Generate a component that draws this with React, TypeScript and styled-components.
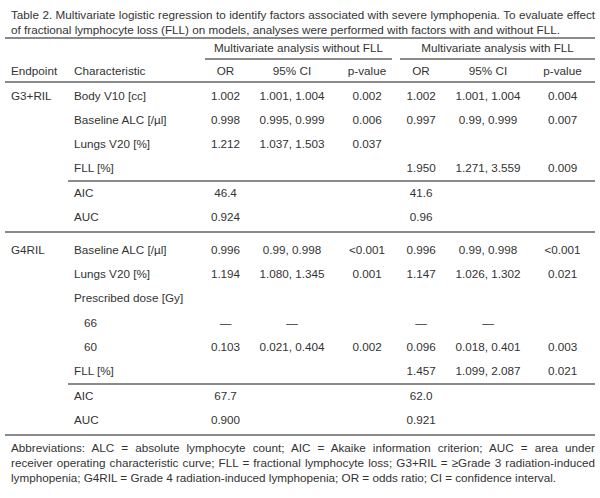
import React from "react";
import styled, { createGlobalStyle } from "styled-components";

const GlobalStyle = createGlobalStyle`
  html, body {
    margin: 0;
    padding: 0;
    background: #ffffff;
  }
`;

type Row = {
  label: string;
  indent?: boolean;
  values?: string[];
};

type Group = {
  endpoint: string;
  lead: number;
  rows: Row[];
  fit: { aic: string[]; auc: string[] };
};

const groups: Group[] = [
  {
    endpoint: "G3+RIL",
    lead: 1,
    rows: [
      { label: "Body V10 [cc]", values: ["1.002", "1.001, 1.004", "0.002", "1.002", "1.001, 1.004", "0.004"] },
      { label: "Baseline ALC [/µl]", values: ["0.998", "0.995, 0.999", "0.006", "0.997", "0.99, 0.999", "0.007"] },
      { label: "Lungs V20 [%]", values: ["1.212", "1.037, 1.503", "0.037", "", "", ""] },
      { label: "FLL [%]", values: ["", "", "", "1.950", "1.271, 3.559", "0.009"] },
    ],
    fit: { aic: ["46.4", "41.6"], auc: ["0.924", "0.96"] },
  },
  {
    endpoint: "G4RIL",
    lead: 5,
    rows: [
      { label: "Baseline ALC [/µl]", values: ["0.996", "0.99, 0.998", "<0.001", "0.996", "0.99, 0.998", "<0.001"] },
      { label: "Lungs V20 [%]", values: ["1.194", "1.080, 1.345", "0.001", "1.147", "1.026, 1.302", "0.021"] },
      { label: "Prescribed dose [Gy]" },
      { label: "66", indent: true, values: ["—", "—", "", "—", "—", ""] },
      { label: "60", indent: true, values: ["0.103", "0.021, 0.404", "0.002", "0.096", "0.018, 0.401", "0.003"] },
      { label: "FLL [%]", values: ["", "", "", "1.457", "1.099, 2.087", "0.021"] },
    ],
    fit: { aic: ["67.7", "62.0"], auc: ["0.900", "0.921"] },
  },
];

const notes = [
  "Abbreviations: ALC = absolute lymphocyte count; AIC = Akaike information criterion; AUC = area under",
  "receiver operating characteristic curve; FLL = fractional lymphocyte loss; G3+RIL = ≥Grade 3 radiation-induced",
  "lymphopenia; G4RIL = Grade 4 radiation-induced lymphopenia; OR = odds ratio; CI = confidence interval.",
];

const App: React.FC = () => {
  return (
    <Page>
      <GlobalStyle />
      <Caption>
        Table 2. Multivariate logistic regression to identify factors associated with severe lymphopenia. To evaluate effect
        of fractional lymphocyte loss (FLL) on models, analyses were performed with factors with and without FLL.
      </Caption>
      <Table>
        <colgroup>
          <col style={{ width: 63 }} />
          <col style={{ width: 137 }} />
          <col style={{ width: 41 }} />
          <col style={{ width: 92 }} />
          <col style={{ width: 58 }} />
          <col style={{ width: 50 }} />
          <col style={{ width: 84 }} />
          <col style={{ width: 65 }} />
        </colgroup>
        <thead>
          <SubHeadRow>
            <th />
            <th />
            <GroupHead colSpan={3}>
              <GroupLabel $side="left">Multivariate analysis without FLL</GroupLabel>
            </GroupHead>
            <GroupHead colSpan={3}>
              <GroupLabel $side="right">Multivariate analysis with FLL</GroupLabel>
            </GroupHead>
          </SubHeadRow>
          <HeadRow>
            <HeadCell $align="left">Endpoint</HeadCell>
            <HeadCell $align="left">Characteristic</HeadCell>
            <HeadCell>OR</HeadCell>
            <HeadCell>95% CI</HeadCell>
            <HeadCell>p-value</HeadCell>
            <HeadCell>OR</HeadCell>
            <HeadCell>95% CI</HeadCell>
            <HeadCell>p-value</HeadCell>
          </HeadRow>
        </thead>
        {groups.map((group) => (
          <Body key={group.endpoint}>
            {group.rows.map((row, i) => {
              const lead = i === 0 ? group.lead : 0;
              return (
                <DataRow key={row.label + i} $extra={lead}>
                  {i === 0 && (
                    <EndpointCell rowSpan={group.rows.length + 2} $lead={group.lead}>
                      {group.endpoint}
                    </EndpointCell>
                  )}
                  <LabelCell $indent={row.indent} $lead={lead}>
                    {row.label}
                  </LabelCell>
                  {(row.values ?? ["", "", "", "", "", ""]).map((value, j) => (
                    <Cell key={j} $lead={lead}>
                      {value}
                    </Cell>
                  ))}
                </DataRow>
              );
            })}
            <DataRow $rule>
              <LabelCell>AIC</LabelCell>
              <Cell>{group.fit.aic[0]}</Cell>
              <Cell />
              <Cell />
              <Cell>{group.fit.aic[1]}</Cell>
              <Cell />
              <Cell />
            </DataRow>
            <DataRow $extra={3}>
              <LabelCell $trail={3}>AUC</LabelCell>
              <Cell $trail={3}>{group.fit.auc[0]}</Cell>
              <Cell $trail={3} />
              <Cell $trail={3} />
              <Cell $trail={3}>{group.fit.auc[1]}</Cell>
              <Cell $trail={3} />
              <Cell $trail={3} />
            </DataRow>
          </Body>
        ))}
      </Table>
      <Notes>
        {notes.map((line, i) => (
          <NoteLine key={i} $justify={i < notes.length - 1}>
            {line}
          </NoteLine>
        ))}
      </Notes>
    </Page>
  );
};

export default App;

const rule = "2px solid #8a8a8a";

const Page = styled.div`
  width: 600px;
  box-sizing: border-box;
  padding: 7px 5px 0 5px;
  font-family: "Liberation Sans", Arial, sans-serif;
  font-size: 11.7px;
  color: #333333;
`;

const Caption = styled.p`
  margin: 0;
  padding: 0 0 0 6px;
  line-height: 15px;
  text-align: justify;
`;

const Table = styled.table`
  width: 590px;
  border-collapse: collapse;
  table-layout: fixed;
  border-top: ${rule};
  border-bottom: ${rule};
`;

const SubHeadRow = styled.tr`
  height: 22px;
`;

const GroupHead = styled.th`
  padding: 0;
  font-weight: normal;
  vertical-align: bottom;
`;

const GroupLabel = styled.div<{ $side: "left" | "right" }>`
  margin: ${(p) => (p.$side === "left" ? "0 4px 0 0" : "0 0 0 4px")};
  padding-bottom: 3px;
  border-bottom: ${rule};
  text-align: center;
  line-height: 14px;
  white-space: nowrap;
`;

const HeadRow = styled.tr`
  height: 22px;
  border-bottom: ${rule};
`;

const HeadCell = styled.th<{ $align?: "left" | "center" }>`
  padding: 0 0 0 ${(p) => (p.$align === "left" ? "6px" : "0")};
  font-weight: normal;
  text-align: ${(p) => p.$align ?? "center"};
  white-space: nowrap;
`;

const Body = styled.tbody`
  border-bottom: ${rule};
`;

const DataRow = styled.tr<{ $extra?: number; $rule?: boolean }>`
  height: ${(p) => 24.4 + (p.$extra ?? 0)}px;
  border-top: ${(p) => (p.$rule ? rule : "none")};
`;

const EndpointCell = styled.td<{ $lead: number }>`
  padding: ${(p) => p.$lead + 5}px 0 0 6px;
  vertical-align: top;
  line-height: 14px;
`;

const LabelCell = styled.td<{ $indent?: boolean; $lead?: number; $trail?: number }>`
  padding: ${(p) => p.$lead ?? 0}px 0 ${(p) => p.$trail ?? 0}px ${(p) => (p.$indent ? "16px" : "6px")};
  line-height: 14px;
  white-space: nowrap;
`;

const Cell = styled.td<{ $lead?: number; $trail?: number }>`
  padding: ${(p) => p.$lead ?? 0}px 0 ${(p) => p.$trail ?? 0}px 0;
  line-height: 14px;
  text-align: center;
  white-space: nowrap;
`;

const Notes = styled.div`
  margin: 4px 0 0 0;
  padding: 0 0 0 6px;
  line-height: 15px;
`;

const NoteLine = styled.div<{ $justify: boolean }>`
  text-align: ${(p) => (p.$justify ? "justify" : "left")};
  text-align-last: ${(p) => (p.$justify ? "justify" : "left")};
  white-space: nowrap;
`;
